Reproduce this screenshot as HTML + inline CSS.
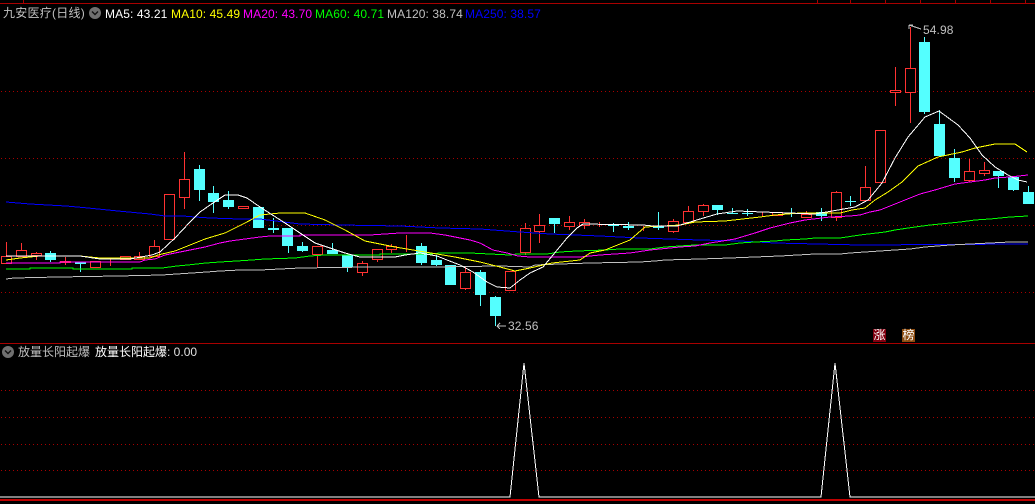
<!DOCTYPE html>
<html><head><meta charset="utf-8"><style>
html,body{margin:0;padding:0;background:#000;width:1035px;height:504px;overflow:hidden}
svg{position:absolute;left:0;top:0}
.t{position:absolute;white-space:pre;font:12px/14px "Liberation Sans","WenQuanYi Zen Hei",sans-serif;letter-spacing:.1px}
.c{font-family:"Liberation Sans","WenQuanYi Zen Hei","Noto Sans CJK SC",sans-serif;letter-spacing:0}
</style></head><body>
<svg width="1035" height="504" viewBox="0 0 1035 504" shape-rendering="crispEdges" fill="none">
<defs><pattern id="d" width="4" height="600" patternUnits="userSpaceOnUse"><rect x="1" width="1" height="600" fill="#a80000"/></pattern></defs>
<path d="M0 3.5H1035M0 343.5H1035" stroke="#a80000"/>
<path d="M23.5 0V3M817.5 0V3M850.5 0V3M885.5 0V3M920.5 0V3M955.5 0V3M990.5 0V3M1025.5 0V3" stroke="#a80000"/>
<g fill="url(#d)">
<rect y="91" width="1035" height="1"/><rect y="158" width="1035" height="1"/><rect y="225" width="1035" height="1"/><rect y="292" width="1035" height="1"/><rect y="390" width="1035" height="1"/><rect y="417" width="1035" height="1"/><rect y="444" width="1035" height="1"/><rect y="470" width="1035" height="1"/>
</g>
<!-- wicks -->
<path stroke="#ff3232" d="M6.5 242V263M21.5 243V250M36.5 252V260M65.5 257V265M95.5 267V268M110.5 258V266M139.5 252V256M154.5 240V246M184.5 152V209M317.5 255V268M362.5 261V276M377.5 260V262M391.5 244V253M406.5 235V252M465.5 266V290M510.5 271V291M525.5 223V255M539.5 214V243M569.5 216V230M584.5 219V229M599.5 222V227M643.5 226V231M673.5 219V233M688.5 206V211M703.5 204V216M762.5 212V216M806.5 211V218M836.5 191V221M865.5 166V187M895.5 67V106M910.5 27V123M969.5 159V182M984.5 162V176"/>
<path stroke="#54ffff" d="M50.5 251V262M80.5 262V272M199.5 165V201M213.5 186V213M228.5 191V209M273.5 218V233M288.5 228V253M302.5 242V252M332.5 243V254M347.5 255V272M421.5 243V265M436.5 255V266M480.5 270V306M495.5 296V326M554.5 218V233M613.5 223V232M628.5 222V230M658.5 212V230M717.5 205V215M732.5 208V214M747.5 209V216M791.5 208V217M821.5 208V221M850.5 196V206M924.5 37V114M939.5 110V157M954.5 149V182M998.5 171V188M1013.5 177V191M1028.5 186V204"/>
<!-- hollow red bodies -->
<g stroke="#ff3232" fill="#000">
<rect x="1.5" y="256.5" width="10" height="7"/><rect x="16.5" y="250.5" width="10" height="6"/><rect x="31.5" y="253.5" width="10" height="2"/><rect x="60.5" y="261.5" width="10" height="1"/><rect x="90.5" y="261.5" width="10" height="6"/><rect x="120.5" y="256.5" width="10" height="3"/><rect x="134.5" y="256.5" width="10" height="3"/><rect x="149.5" y="246.5" width="10" height="10"/><rect x="164.5" y="194.5" width="10" height="45"/><rect x="179.5" y="179.5" width="10" height="18"/><rect x="238.5" y="206.5" width="10" height="2"/>
<rect x="312.5" y="246.5" width="10" height="8"/><rect x="357.5" y="263.5" width="10" height="9"/><rect x="372.5" y="249.5" width="10" height="10"/><rect x="386.5" y="246.5" width="10" height="3"/><rect x="401.5" y="248.5" width="10" height="0"/><rect x="460.5" y="272.5" width="10" height="16"/><rect x="505.5" y="271.5" width="10" height="19"/>
<rect x="520.5" y="228.5" width="10" height="24"/><rect x="534.5" y="225.5" width="10" height="6"/><rect x="564.5" y="222.5" width="10" height="4"/><rect x="579.5" y="222.5" width="10" height="3"/><rect x="594.5" y="224.5" width="10" height="0"/><rect x="638.5" y="226.5" width="10" height="0"/><rect x="668.5" y="221.5" width="10" height="10"/><rect x="683.5" y="211.5" width="10" height="11"/><rect x="698.5" y="205.5" width="10" height="6"/><rect x="757.5" y="214.5" width="10" height="0"/><rect x="772.5" y="212.5" width="10" height="3"/><rect x="801.5" y="214.5" width="10" height="3"/><rect x="831.5" y="192.5" width="10" height="25"/><rect x="860.5" y="187.5" width="10" height="13"/><rect x="875.5" y="130.5" width="10" height="52"/><rect x="890.5" y="90.5" width="10" height="2"/><rect x="905.5" y="68.5" width="10" height="24"/><rect x="964.5" y="171.5" width="10" height="9"/><rect x="979.5" y="170.5" width="10" height="3"/>
</g>
<!-- cyan bodies -->
<g fill="#54ffff">
<rect x="45" y="253" width="11" height="7"/><rect x="75" y="262" width="11" height="2"/><rect x="194" y="169" width="11" height="21"/><rect x="208" y="193" width="11" height="9"/><rect x="223" y="200" width="11" height="7"/><rect x="253" y="207" width="11" height="21"/><rect x="268" y="228" width="11" height="2"/><rect x="282" y="228" width="11" height="18"/><rect x="297" y="246" width="11" height="5"/><rect x="327" y="250" width="11" height="4"/><rect x="342" y="255" width="11" height="12"/><rect x="416" y="246" width="11" height="17"/><rect x="431" y="260" width="11" height="5"/><rect x="445" y="265" width="11" height="20"/><rect x="475" y="272" width="11" height="23"/><rect x="490" y="297" width="11" height="19"/><rect x="549" y="218" width="11" height="6"/><rect x="608" y="225" width="11" height="1"/><rect x="623" y="226" width="11" height="2"/><rect x="653" y="226" width="11" height="2"/><rect x="712" y="205" width="11" height="5"/><rect x="727" y="213" width="11" height="1"/><rect x="742" y="213" width="11" height="1"/><rect x="786" y="213" width="11" height="1"/><rect x="816" y="212" width="11" height="4"/><rect x="845" y="201" width="11" height="1"/><rect x="919" y="42" width="11" height="70"/><rect x="934" y="124" width="11" height="32"/><rect x="949" y="158" width="11" height="20"/><rect x="993" y="171" width="11" height="5"/><rect x="1008" y="177" width="11" height="13"/><rect x="1023" y="192" width="11" height="12"/>
</g>
<!-- MA250 -->
<polyline stroke="#0000ff" points="6,202 30,204 66,206 88,208 118,211 150,214 165,216 183,216 195,217 210,218 240,219 260,219 300,224 340,225 400,226 440,228 480,229 520,232 550,234 600,236 640,238 700,240 740,241 775,243 860,245 1028,244"/>
<!-- MA120 -->
<polyline stroke="#c0c0c0" points="6,279 14,278 58,277 118,276 162,275 177,274 192,273 207,272 220,271 240,270 260,270 300,268 370,267 430,267 500,266 530,267 535,265 560,264 590,263 640,262 655,261 665,260 700,259 730,258 755,257 780,256 815,254 840,254 850,253 880,251 910,249 925,247 950,245 990,243 1010,242 1028,242"/>
<!-- MA60 -->
<polyline stroke="#00ff00" points="6,269 30,269 30,268 73,268 73,269 132,269 132,268 162,268 177,266 188,265 206,263 220,262 237,261 252,260 265,259 295,258 310,256 325,255 380,255 380,254 430,254 440,253 470,253 490,254 510,255 517,254 547,254 560,252 577,251 605,250 620,249 650,249 665,247 680,246 695,245 725,245 740,243 755,242 775,241 785,240 805,239 815,238 840,238 860,235 885,232 895,230 915,227 930,225 940,224 960,222 975,220 990,219 1010,217 1028,216"/>
<!-- MA20 -->
<polyline stroke="#ff00ff" points="6,263 60,263 60,262 140,262 145,260 155,259 165,255 175,253 185,251 195,249 205,247 220,243 230,241 245,239 260,237 270,236 300,236 300,235 370,235 400,233 430,233 445,235 460,238 470,240 480,243 493,250 507,253 518,256 530,257 580,257 600,255 615,254 630,253 650,250 680,247 695,246 710,243 735,239 755,233 770,228 790,223 805,220 830,217 850,216 860,215 870,212 880,210 890,206 905,200 920,194 935,190 955,184 985,180 995,178 1010,177 1028,175"/>
<!-- MA10 -->
<polyline stroke="#ffff00" points="6,260 20,258 40,256 80,256 100,258 150,258 158,255 175,251 190,245 205,239 225,233 245,223 260,215 280,213 305,213 325,220 345,230 365,241 395,247 425,252 455,257 480,262 500,267 515,271 530,268 552,263 580,260 590,253 605,250 630,240 645,227 680,225 695,222 725,221 760,217 775,215 800,213 840,213 852,210 865,208 875,200 888,192 902,182 918,166 938,157 962,152 975,148 995,144 1015,144 1027,152"/>
<!-- MA5 -->
<polyline stroke="#ffffff" points="6,256 80,256 100,259 130,259 152,255 160,252 175,238 190,222 200,212 213,203 225,195 238,195 247,198 260,207 285,223 315,243 345,253 360,257 395,257 405,255 420,253 437,256 447,260 460,265 473,272 487,282 497,287 510,288 520,280 530,273 543,267 553,255 567,238 577,228 583,224 643,225 653,226 677,226 687,223 700,219 717,214 737,211 815,214 838,210 855,207 868,200 882,183 895,158 908,137 925,117 939,111 958,125 970,138 982,155 995,167 1008,175 1018,180 1027,182"/>
<!-- labels arrows -->
<path stroke="#c0c0c0" d="M497 326H506M497 326L500 323M497 326L500 329M909 25L921 29M909 25H913M909 25V29"/>
<!-- lower panel -->
<polyline stroke="#ffffff" points="0,497 510,497 524,363 539,497 821,497 835,363 850,497 1035,497"/>
<rect x="0" y="499" width="1035" height="2" fill="#c00000"/>
<!-- icons -->
<g shape-rendering="auto">
<circle cx="95" cy="13" r="6" fill="#707070"/><path d="M92 11.5L95 14.5L98 11.5" stroke="#111" stroke-width="1.4"/>
<circle cx="8" cy="352" r="6" fill="#707070"/><path d="M5 350.5L8 353.5L11 350.5" stroke="#111" stroke-width="1.4"/>
</g>
<rect x="873" y="329" width="13" height="13" fill="#800010"/>
<rect x="902" y="329" width="13" height="13" fill="#8c4c10"/>
</svg>
<div class="t c" style="left:3px;top:6px;letter-spacing:.25px;color:#c0c0c0">九安医疗(日线)</div>
<div class="t" style="left:105px;top:7px;color:#fff">MA5: 43.21</div>
<div class="t" style="left:171px;top:7px;color:#ff0">MA10: 45.49</div>
<div class="t" style="left:243px;top:7px;color:#f0f">MA20: 43.70</div>
<div class="t" style="left:315px;top:7px;color:#0f0">MA60: 40.71</div>
<div class="t" style="left:387px;top:7px;color:#c0c0c0">MA120: 38.74</div>
<div class="t" style="left:465px;top:7px;color:#00f">MA250: 38.57</div>
<div class="t" style="left:508px;top:319px;color:#c0c0c0">32.56</div>
<div class="t" style="left:923px;top:23px;color:#c0c0c0">54.98</div>
<div class="t c" style="left:18px;top:345px;color:#c0c0c0">放量长阳起爆</div>
<div class="t c" style="left:95px;top:345px;color:#fff">放量长阳起爆<span style="color:#e0e0e0">: 0.00</span></div>
<div class="t c" style="left:873px;top:329px;width:13px;text-align:center;color:#fff;line-height:13px">涨</div>
<div class="t c" style="left:902px;top:329px;width:13px;text-align:center;color:#fff;line-height:13px">榜</div>
</body></html>
